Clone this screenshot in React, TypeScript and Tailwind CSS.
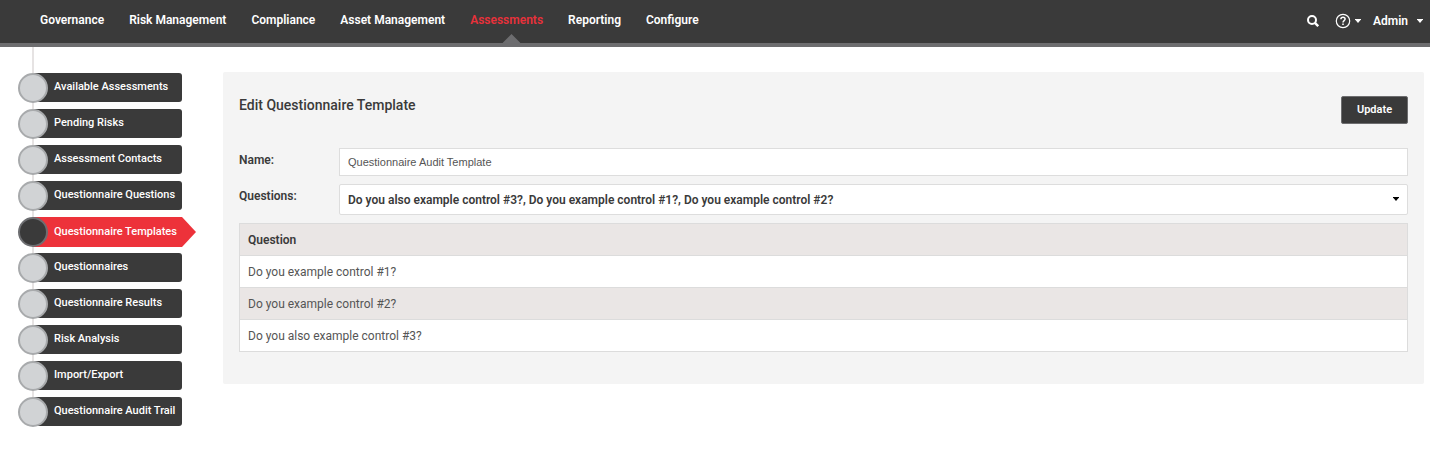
import { useState } from 'react'

const navItems = [
  'Governance',
  'Risk Management',
  'Compliance',
  'Asset Management',
  'Assessments',
  'Reporting',
  'Configure',
]

const sideItems = [
  'Available Assessments',
  'Pending Risks',
  'Assessment Contacts',
  'Questionnaire Questions',
  'Questionnaire Templates',
  'Questionnaires',
  'Questionnaire Results',
  'Risk Analysis',
  'Import/Export',
  'Questionnaire Audit Trail',
]

const questions = [
  'Do you example control #1?',
  'Do you example control #2?',
  'Do you also example control #3?',
]

function Caret({ className }: { className?: string }) {
  return (
    <svg className={className} width="6" height="4" viewBox="0 0 6 4" fill="currentColor" aria-hidden="true">
      <path d="M0 0h6v.5L3 4 0 .5z" />
    </svg>
  )
}

function SearchIcon() {
  return (
    <svg width="12" height="12" viewBox="0 0 12 12" fill="none" stroke="currentColor" strokeWidth="2" aria-hidden="true">
      <circle cx="5" cy="5" r="4" />
      <path d="M7.9 7.9l3.3 3.3" strokeWidth="2.4" />
    </svg>
  )
}

function HelpIcon() {
  return (
    <svg width="16" height="16" viewBox="0 0 16 16" fill="none" stroke="currentColor" aria-hidden="true">
      <circle cx="8" cy="8" r="6.7" strokeWidth="1.2" />
      <path d="M5.9 6.3c0-1.3.9-2 2.1-2s2.1.7 2.1 1.8c0 1.5-2.1 1.6-2.1 3.3" strokeWidth="1.5" />
      <path d="M8 10.4v1.6" strokeWidth="1.6" />
    </svg>
  )
}

function Header() {
  return (
    <header className="flex h-[47px] items-stretch justify-between border-b-4 border-[#6d6d6f] bg-[#3a3a3a] pl-10 pr-[7px] text-[12px] font-semibold text-white">
      <nav className="flex gap-[25px]">
        {navItems.map(item => {
          const active = item === 'Assessments'
          return (
            <a
              key={item}
              href="#"
              aria-current={active ? 'page' : undefined}
              className={`relative flex items-center whitespace-nowrap pb-1 ${active ? 'text-[#e9313a]' : ''}`}
            >
              {item}
              {active && (
                <svg
                  className="absolute bottom-0 left-1/2 -translate-x-1/4 text-[#6d6d6f]"
                  width="18"
                  height="9"
                  viewBox="0 0 18 9"
                  fill="currentColor"
                >
                  <path d="M9 0l9 9H0z" />
                </svg>
              )}
            </a>
          )
        })}
      </nav>
      <div className="flex items-center pb-0.5">
        <a href="#" aria-label="Search" className="mr-4">
          <SearchIcon />
        </a>
        <button type="button" aria-label="Help" className="mr-3 flex items-center gap-1">
          <HelpIcon />
          <Caret />
        </button>
        <button type="button" className="flex items-center gap-[9px]">
          Admin
          <Caret />
        </button>
      </div>
    </header>
  )
}

function Sidebar() {
  return (
    <aside className="relative w-[178px] shrink-0 pt-[26px]">
      <div className="absolute bottom-4 left-[14px] top-0 w-0.5 bg-[#e6e3e3]" />
      <ul className="relative flex flex-col gap-1.5">
        {sideItems.map(item => {
          const active = item === 'Questionnaire Templates'
          return (
            <li key={item}>
              <a
                href="#"
                aria-current={active ? 'page' : undefined}
                className="flex h-[30px] items-start text-[11px] font-medium text-white"
              >
                <span
                  className={`z-10 size-[30px] shrink-0 rounded-full border-2 ${
                    active ? 'border-[#6d6e71] bg-[#3a3a3a]' : 'border-[#a8aaac] bg-[#d1d3d5]'
                  }`}
                />
                <span
                  className={`-ml-[15px] flex items-center whitespace-nowrap pl-[21px] ${
                    active
                      ? 'h-[30px] w-[163px] bg-[#ed323a] [clip-path:polygon(0_0,149px_0,100%_50%,149px_100%,0_100%)]'
                      : 'h-[29px] w-[149px] rounded-[3px] bg-[#3a3a3a]'
                  }`}
                >
                  {item}
                </span>
              </a>
            </li>
          )
        })}
      </ul>
    </aside>
  )
}

export default function App() {
  const [name, setName] = useState('Questionnaire Audit Template')

  return (
    <div className="bg-white font-['Roboto',sans-serif] text-[#3a3a3a]">
      <Header />
      <div className="flex items-start gap-[27px] pl-[18px] pr-1.5">
        <Sidebar />
        <main className="mt-[25px] min-w-0 flex-1 rounded-xs bg-[#f4f4f4] px-4 pb-8 pt-6">
          <form onSubmit={e => e.preventDefault()}>
            <div className="mb-6 flex items-start justify-between">
              <h1 className="text-[14px] font-medium leading-[18px]">Edit Questionnaire Template</h1>
              <button
                type="submit"
                className="h-7 w-[67px] rounded-xs border border-[#6d6d6f] bg-[#3a3a3a] text-[11px] font-semibold text-white"
              >
                Update
              </button>
            </div>

            <div className="mb-2 flex">
              <label htmlFor="name" className="w-[100px] shrink-0 pt-1 text-[12px] font-semibold leading-4">
                Name:
              </label>
              <input
                id="name"
                type="text"
                value={name}
                onChange={e => setName(e.target.value)}
                className="h-7 min-w-0 flex-1 border border-[#dddddd] bg-white px-2 font-['Liberation_Sans',Arial,sans-serif] text-[11px] text-[#555555]"
              />
            </div>

            <div className="mb-2 flex">
              <label htmlFor="questions" className="w-[100px] shrink-0 pt-1 text-[12px] font-semibold leading-4">
                Questions:
              </label>
              <div className="relative min-w-0 flex-1">
                <select
                  id="questions"
                  className="h-[31px] w-full appearance-none rounded-xs border border-[#dddddd] bg-white pl-2 pr-6 text-[12px] font-semibold"
                >
                  <option>
                    Do you also example control #3?, Do you example control #1?, Do you example control #2?
                  </option>
                </select>
                <Caret className="pointer-events-none absolute right-[9px] top-[13px] text-black" />
              </div>
            </div>

            <table className="w-full border border-[#dcdcdc] text-[12px]">
              <thead>
                <tr className="h-8 bg-[#eae6e5]">
                  <th scope="col" className="px-2 text-left font-semibold">
                    Question
                  </th>
                </tr>
              </thead>
              <tbody>
                {questions.map(question => (
                  <tr key={question} className="h-8 border-t border-[#dcdcdc] odd:bg-white even:bg-[#eae6e5]">
                    <td className="px-2 text-[#555555]">{question}</td>
                  </tr>
                ))}
              </tbody>
            </table>
          </form>
        </main>
      </div>
    </div>
  )
}
